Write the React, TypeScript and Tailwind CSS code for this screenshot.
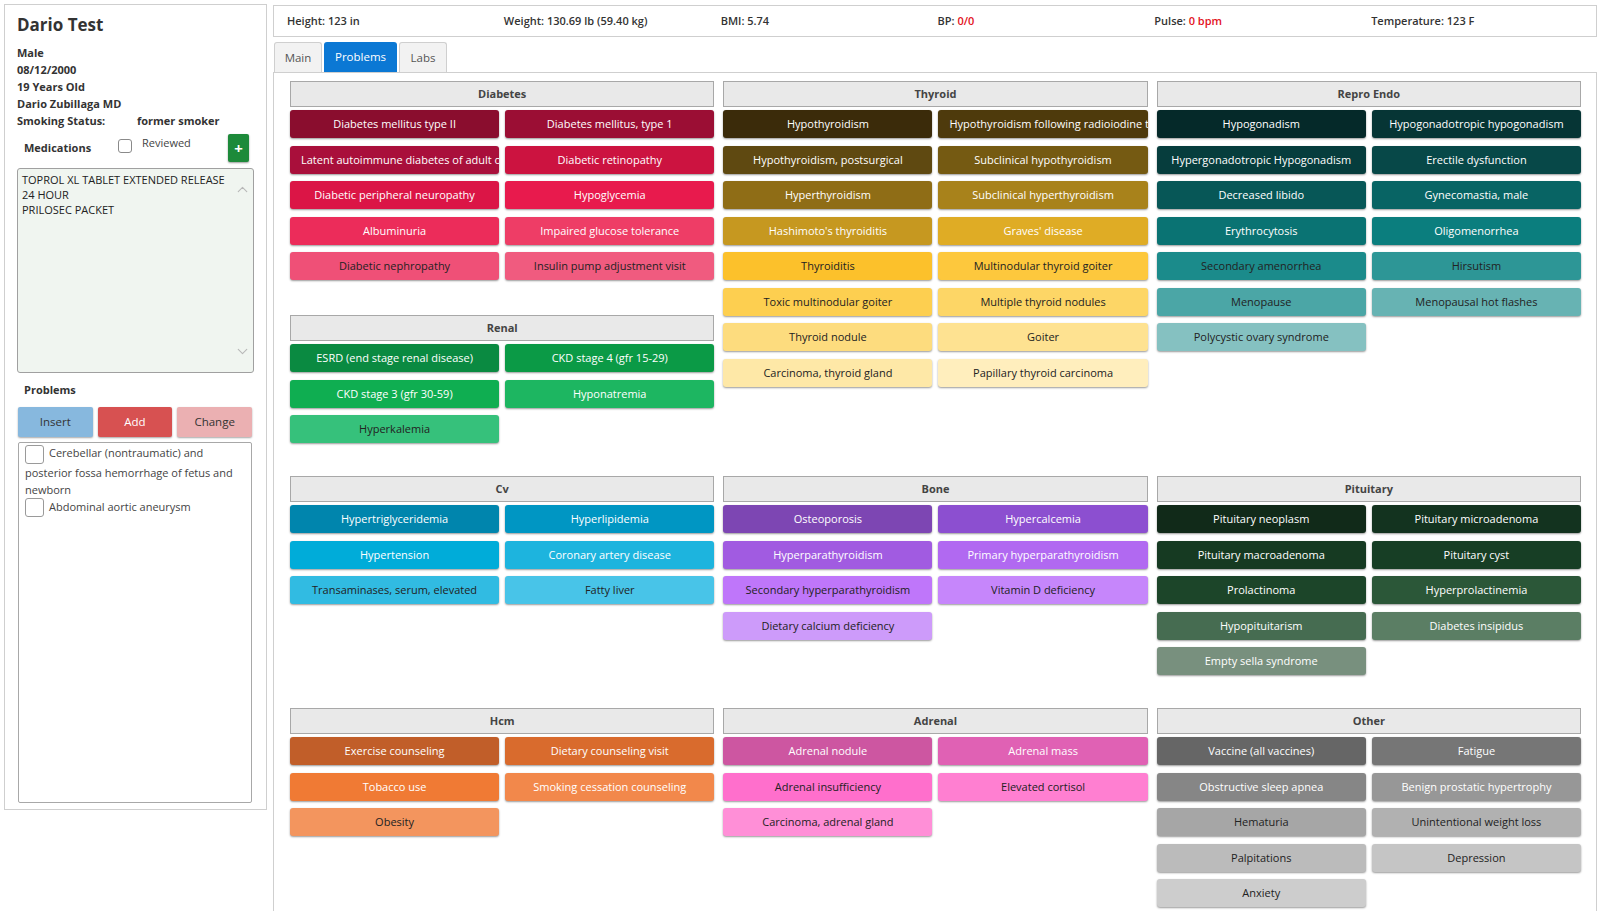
import React from 'react';
import { ChevronUp, ChevronDown } from 'lucide-react';

type Item = [string, string];

const W = 'text-white';
const D = 'text-[#222]';

const diabetes: Item[] = [
  ['Diabetes mellitus type II', `bg-[#8a0d2e] ${W}`],
  ['Diabetes mellitus, type 1', `bg-[#9b0e34] ${W}`],
  ['Latent autoimmune diabetes of adult onset', `bg-[#a90f3b] ${W}`],
  ['Diabetic retinopathy', `bg-[#cc1340] ${W}`],
  ['Diabetic peripheral neuropathy', `bg-[#db1546] ${W}`],
  ['Hypoglycemia', `bg-[#e81a4d] ${W}`],
  ['Albuminuria', `bg-[#ec2c5a] ${W}`],
  ['Impaired glucose tolerance', `bg-[#ee3d66] ${W}`],
  ['Diabetic nephropathy', `bg-[#ef5077] ${D}`],
  ['Insulin pump adjustment visit', `bg-[#f05b7f] ${D}`],
];

const renal: Item[] = [
  ['ESRD (end stage renal disease)', `bg-[#0a8a41] ${W}`],
  ['CKD stage 4 (gfr 15-29)', `bg-[#0b9a46] ${W}`],
  ['CKD stage 3 (gfr 30-59)', `bg-[#0fae51] ${W}`],
  ['Hyponatremia', `bg-[#1db661] ${W}`],
  ['Hyperkalemia', `bg-[#36c17b] ${D}`],
];

const thyroid: Item[] = [
  ['Hypothyroidism', `bg-[#3b2b0a] ${W}`],
  ['Hypothyroidism following radioiodine therapy', `bg-[#4e3a0c] ${W}`],
  ['Hypothyroidism, postsurgical', `bg-[#5f4911] ${W}`],
  ['Subclinical hypothyroidism', `bg-[#755a12] ${W}`],
  ['Hyperthyroidism', `bg-[#8f6d16] ${W}`],
  ['Subclinical hyperthyroidism', `bg-[#a8821b] ${W}`],
  ["Hashimoto's thyroiditis", `bg-[#c69820] ${W}`],
  ["Graves' disease", `bg-[#dfac25] ${W}`],
  ['Thyroiditis', `bg-[#fcc12b] ${D}`],
  ['Multinodular thyroid goiter', `bg-[#fdc83d] ${D}`],
  ['Toxic multinodular goiter', `bg-[#fdcf50] ${D}`],
  ['Multiple thyroid nodules', `bg-[#fdd666] ${D}`],
  ['Thyroid nodule', `bg-[#fddc7e] ${D}`],
  ['Goiter', `bg-[#fee291] ${D}`],
  ['Carcinoma, thyroid gland', `bg-[#fee8a7] ${D}`],
  ['Papillary thyroid carcinoma', `bg-[#ffeebd] ${D}`],
];

const repro: Item[] = [
  ['Hypogonadism', `bg-[#052929] ${W}`],
  ['Hypogonadotropic hypogonadism', `bg-[#063535] ${W}`],
  ['Hypergonadotropic Hypogonadism', `bg-[#063d3d] ${W}`],
  ['Erectile dysfunction', `bg-[#074848] ${W}`],
  ['Decreased libido', `bg-[#075757] ${W}`],
  ['Gynecomastia, male', `bg-[#086464] ${W}`],
  ['Erythrocytosis', `bg-[#0a7373] ${W}`],
  ['Oligomenorrhea', `bg-[#0b7e7e] ${W}`],
  ['Secondary amenorrhea', `bg-[#1b8b8b] ${D}`],
  ['Hirsutism', `bg-[#2d9696] ${D}`],
  ['Menopause', `bg-[#4ba6a6] ${D}`],
  ['Menopausal hot flashes', `bg-[#67b3b3] ${D}`],
  ['Polycystic ovary syndrome', `bg-[#85c1c1] ${D}`],
];

const cv: Item[] = [
  ['Hypertriglyceridemia', `bg-[#0085ad] ${W}`],
  ['Hyperlipidemia', `bg-[#0096c3] ${W}`],
  ['Hypertension', `bg-[#00acd9] ${W}`],
  ['Coronary artery disease', `bg-[#1db4de] ${W}`],
  ['Transaminases, serum, elevated', `bg-[#31bbe2] ${D}`],
  ['Fatty liver', `bg-[#48c4e8] ${D}`],
];

const bone: Item[] = [
  ['Osteoporosis', `bg-[#7d46b3] ${W}`],
  ['Hypercalcemia', `bg-[#8c4fd0] ${W}`],
  ['Hyperparathyroidism', `bg-[#a15be1] ${W}`],
  ['Primary hyperparathyroidism', `bg-[#b169f1] ${W}`],
  ['Secondary hyperparathyroidism', `bg-[#bf76fa] ${D}`],
  ['Vitamin D deficiency', `bg-[#c686fb] ${D}`],
  ['Dietary calcium deficiency', `bg-[#cd9bfa] ${D}`],
];

const pituitary: Item[] = [
  ['Pituitary neoplasm', `bg-[#112a19] ${W}`],
  ['Pituitary microadenoma', `bg-[#13331f] ${W}`],
  ['Pituitary macroadenoma', `bg-[#163a22] ${W}`],
  ['Pituitary cyst', `bg-[#173e25] ${W}`],
  ['Prolactinoma', `bg-[#1c4529] ${W}`],
  ['Hyperprolactinemia', `bg-[#2b5738] ${W}`],
  ['Hypopituitarism', `bg-[#466c51] ${W}`],
  ['Diabetes insipidus', `bg-[#5b7e64] ${W}`],
  ['Empty sella syndrome', `bg-[#78907e] ${W}`],
];

const hcm: Item[] = [
  ['Exercise counseling', `bg-[#c15e29] ${W}`],
  ['Dietary counseling visit', `bg-[#d96b2d] ${W}`],
  ['Tobacco use', `bg-[#f07a34] ${W}`],
  ['Smoking cessation counseling', `bg-[#f2884b] ${W}`],
  ['Obesity', `bg-[#f3955e] ${D}`],
];

const adrenal: Item[] = [
  ['Adrenal nodule', `bg-[#cd56a1] ${W}`],
  ['Adrenal mass', `bg-[#e061b4] ${W}`],
  ['Adrenal insufficiency', `bg-[#ff6fcc] ${D}`],
  ['Elevated cortisol', `bg-[#ff7fd1] ${D}`],
  ['Carcinoma, adrenal gland', `bg-[#ff8fd7] ${D}`],
];

const other: Item[] = [
  ['Vaccine (all vaccines)', `bg-[#666666] ${W}`],
  ['Fatigue', `bg-[#767676] ${W}`],
  ['Obstructive sleep apnea', `bg-[#868686] ${W}`],
  ['Benign prostatic hypertrophy', `bg-[#979797] ${W}`],
  ['Hematuria', `bg-[#a6a6a6] ${D}`],
  ['Unintentional weight loss', `bg-[#b1b1b1] ${D}`],
  ['Palpitations', `bg-[#bbbbbb] ${D}`],
  ['Depression', `bg-[#c5c5c5] ${D}`],
  ['Anxiety', `bg-[#cdcdcd] ${D}`],
];

const Section = ({ title, items }: { title: string; items: Item[] }) => (
  <div>
    <div className="h-[26px] border border-[#a8a8a8] bg-[#e9e9e9] text-center text-[11px] font-bold leading-[24px] text-[#444]">
      {title}
    </div>
    <div className="mt-[3px] grid grid-cols-2 gap-x-[6px] gap-y-[7.5px]">
      {items.map(([label, cls]) => (
        <div
          key={label}
          className={`h-[28px] overflow-hidden whitespace-nowrap rounded-[3px] px-[11px] text-center text-[11px] leading-[28px] shadow-[0_1px_2px_rgba(0,0,0,0.4)] ${cls}`}
        >
          {label}
        </div>
      ))}
    </div>
  </div>
);

const Vital = ({ label, value, red }: { label: string; value: string; red?: boolean }) => (
  <div className="text-[11px] font-semibold text-[#333]">
    {label} <span className={red ? 'text-[#e3121c]' : ''}>{value}</span>
  </div>
);

const Box = () => (
  <span className="inline-block h-[19px] w-[19px] rounded-[3px] border border-[#9a9a9a] bg-white align-middle" />
);

const App = () => {
  return (
    <div className="flex min-h-[911px] gap-[6px] bg-white pl-[4px] pr-[11px] pt-[4px] font-['Open_Sans',sans-serif] text-[#333]">
      {/* Patient panel */}
      <div className="flex h-[806px] w-[263px] shrink-0 flex-col border border-[#cfcfcf] px-[12px] pt-[8px]">
        <div className="text-[17px] font-bold leading-[23px] text-[#333]">Dario Test</div>
        <div className="mt-[8px] text-[11px] font-bold leading-[17px] text-[#333]">
          <div>Male</div>
          <div>08/12/2000</div>
          <div>19 Years Old</div>
          <div>Dario Zubillaga MD</div>
          <div className="flex">
            <span className="w-[120px]">Smoking Status:</span>
            <span>former smoker</span>
          </div>
        </div>

        <div className="mt-[5px] flex h-[28px] items-center">
          <span className="ml-[7px] w-[94px] text-[11px] font-bold text-[#333]">Medications</span>
          <span className="mt-[5px] h-[14px] w-[14px] self-start rounded-[3px] border border-[#8a8a8a] bg-white" />
          <span className="ml-[10px] mt-[1px] self-start text-[11px] text-[#444]">Reviewed</span>
          <button className="ml-auto mr-[5px] flex h-[28px] w-[21px] items-center justify-center rounded-[2px] bg-[#1d8a3a] text-[15px] font-bold text-white shadow-[0_1px_2px_rgba(0,0,0,0.4)]">
            +
          </button>
        </div>

        <div className="relative mt-[6px] h-[205px] rounded-[3px] border border-[#a0a0a0] bg-[#f0f5f0] pl-[4px] pr-[18px] pt-[3px] text-[11px] leading-[15px] text-[#222]">
          <div>TOPROL XL TABLET EXTENDED RELEASE</div>
          <div>24 HOUR</div>
          <div>PRILOSEC PACKET</div>
          <ChevronUp className="absolute right-[2px] top-[12px] h-[17px] w-[17px] text-[#b8b8b8]" strokeWidth={1.6} />
          <ChevronDown className="absolute bottom-[12px] right-[2px] h-[17px] w-[17px] text-[#b8b8b8]" strokeWidth={1.6} />
        </div>

        <div className="ml-[7px] mt-[8px] text-[11px] font-bold leading-[17px] text-[#333]">Problems</div>

        <div className="ml-[1px] mr-[2px] mt-[9px] grid h-[30px] grid-cols-3 gap-[5px]">
          <button className="rounded-[2px] bg-[#87b8de] text-[11.5px] text-[#333] shadow-[0_1px_2px_rgba(0,0,0,0.35)]">Insert</button>
          <button className="rounded-[2px] bg-[#d75151] text-[11.5px] text-white shadow-[0_1px_2px_rgba(0,0,0,0.35)]">Add</button>
          <button className="rounded-[2px] bg-[#ebb0b2] text-[11.5px] text-[#333] shadow-[0_1px_2px_rgba(0,0,0,0.35)]">Change</button>
        </div>

        <div className="ml-[1px] mr-[2px] mt-[5px] h-[361px] rounded-[2px] border border-[#a8a8a8] pl-[6px] pr-[6px] pt-[1px] text-[11px] leading-[17px] text-[#444]">
          <div>
            <Box />
            <span className="ml-[5px]">Cerebellar (nontraumatic) and posterior fossa hemorrhage of fetus and newborn</span>
          </div>
          <div>
            <Box />
            <span className="ml-[5px]">Abdominal aortic aneurysm</span>
          </div>
        </div>
      </div>

      {/* Main area */}
      <div className="flex min-w-0 flex-1 flex-col pt-[1px]">
        <div className="grid h-[32px] grid-cols-6 items-center border border-[#cfcfcf] pl-[13px] pr-[8px]">
          <Vital label="Height:" value="123 in" />
          <Vital label="Weight:" value="130.69 lb (59.40 kg)" />
          <Vital label="BMI:" value="5.74" />
          <Vital label="BP:" value="0/0" red />
          <Vital label="Pulse:" value="0 bpm" red />
          <Vital label="Temperature:" value="123 F" />
        </div>

        <div className="ml-[1px] mt-[5px] flex h-[30px] gap-[2px]">
          <div className="flex w-[48px] items-center justify-center rounded-t-[3px] border border-b-0 border-[#cfcfcf] bg-[#f2f2f2] text-[11.5px] text-[#555]">Main</div>
          <div className="flex w-[73px] items-center justify-center rounded-t-[3px] bg-[#0b78d4] text-[11.5px] text-white">Problems</div>
          <div className="flex w-[48px] items-center justify-center rounded-t-[3px] border border-b-0 border-[#cfcfcf] bg-[#f2f2f2] text-[11.5px] text-[#555]">Labs</div>
        </div>

        <div className="flex-1 border border-b-0 border-[#cfcfcf] pl-[16px] pr-[15px] pt-[8px]">
          <div className="grid grid-cols-3 gap-x-[9px] gap-y-[33px]">
            <div className="flex flex-col gap-[35px]">
              <Section title="Diabetes" items={diabetes} />
              <Section title="Renal" items={renal} />
            </div>
            <Section title="Thyroid" items={thyroid} />
            <Section title="Repro Endo" items={repro} />

            <Section title="Cv" items={cv} />
            <Section title="Bone" items={bone} />
            <Section title="Pituitary" items={pituitary} />

            <Section title="Hcm" items={hcm} />
            <Section title="Adrenal" items={adrenal} />
            <Section title="Other" items={other} />
          </div>
        </div>
      </div>
    </div>
  );
};

export default App;
